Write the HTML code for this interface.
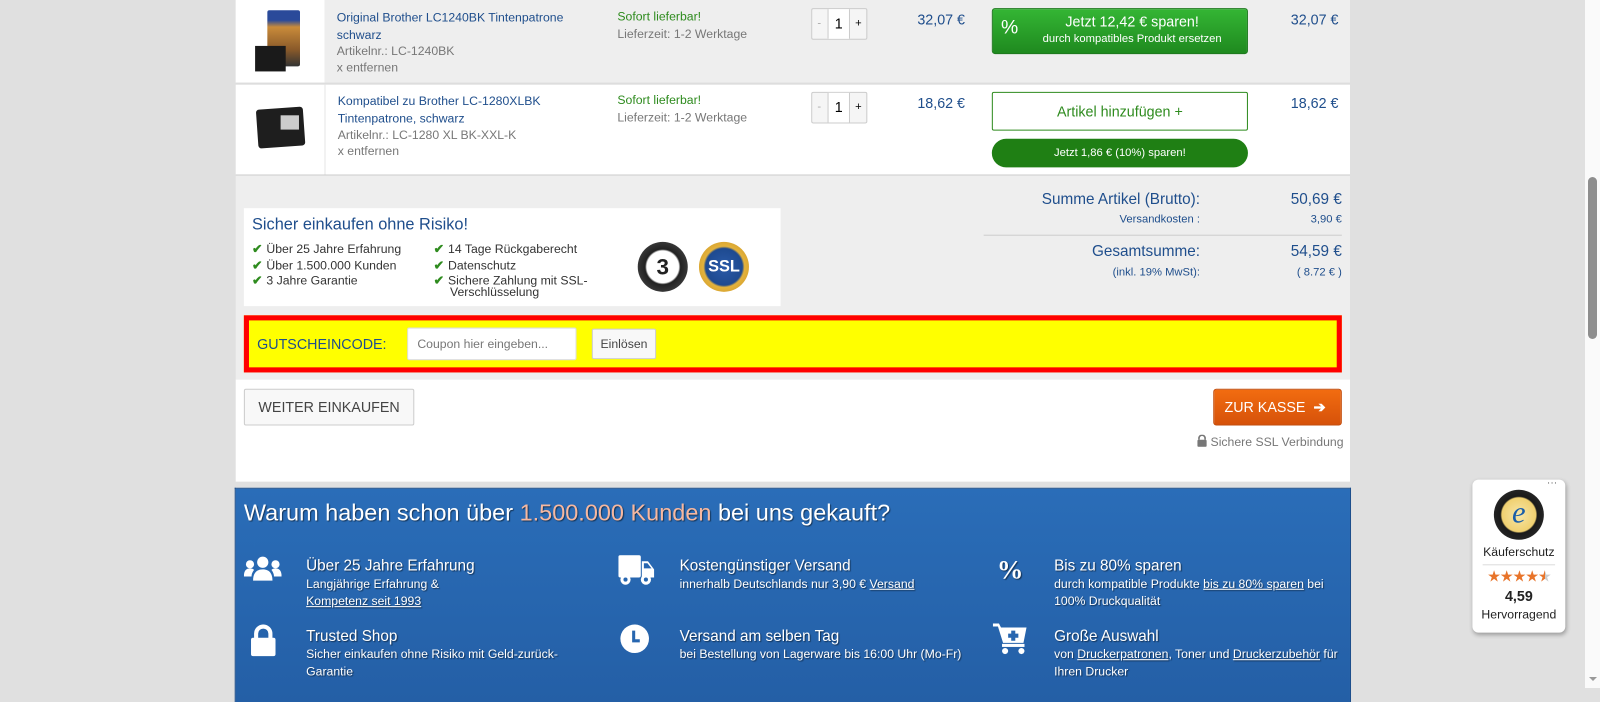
<!DOCTYPE html>
<html><head><meta charset="utf-8"><style>
*{margin:0;padding:0;box-sizing:border-box}
body{width:1600px;height:688px;overflow:hidden;background:#e0e0e0;font-family:"Liberation Sans",sans-serif;position:relative}
#w{position:absolute;left:0;top:0;width:1568px;height:675px;transform:scale(1.0204);transform-origin:0 0}
.a{position:absolute}
.blue{color:#1f4e8c}
.gray{color:#777}
.green{color:#2e8b1e}
.qty{position:absolute;width:55px;height:31px;border:1px solid #ccc;border-radius:2px;background:#f5f5f5;font-size:11px}
.qty span{position:absolute;top:8px}
.qty b{position:absolute;left:15px;top:0;width:22px;height:29px;background:#fff;border-left:1px solid #ccc;border-right:1px solid #ccc;font-weight:normal;font-size:14px;text-align:center;line-height:29px;color:#000}
.bl{font-size:12px;line-height:14px;color:#333}
.ck{color:#2e8b1e;font-weight:bold;margin-right:4px}
.wh{color:#fff;text-shadow:1px 1px 1px rgba(0,0,0,.5)}
.wt{font-size:15px}
.ws{font-size:12px;line-height:17px}
.ws u{text-decoration:underline}
</style></head><body>
<div id="w">
<div class="a" style="left:231px;top:0;width:1092px;height:81px;background:#eee"></div>
<div class="a" style="left:231px;top:0;width:87px;height:81px;background:#fff"></div>
<div class="a" style="left:231px;top:81px;width:1092px;height:2px;background:#ddd"></div>
<div class="a" style="left:231px;top:83px;width:1092px;height:88px;background:#fff"></div>
<div class="a" style="left:318px;top:83px;width:1px;height:88px;background:#e5e5e5"></div>
<div class="a" style="left:231px;top:171px;width:1092px;height:1px;background:#ccc"></div>
<div class="a" style="left:231px;top:172px;width:1092px;height:200px;background:#eee"></div>
<div class="a" style="left:231px;top:372px;width:1092px;height:100px;background:#fff"></div>

<div class="a" style="left:262px;top:10px;width:32px;height:55px;background:linear-gradient(#2a4a9a 0,#2a4a9a 18%,#c98b3a 30%,#8a5a2a 70%,#333 100%);border-radius:2px"></div>
<div class="a" style="left:250px;top:45px;width:30px;height:25px;background:#1a1a1a"></div>
<div class="a" style="left:252px;top:106px;width:46px;height:38px;background:#1e1e1e;border-radius:3px;transform:rotate(-4deg)"></div>
<div class="a" style="left:275px;top:113px;width:18px;height:14px;background:#ccc"></div>

<div class="a blue" style="left:330px;top:9px;font-size:12px;line-height:17px">Original Brother LC1240BK Tintenpatrone<br>schwarz</div>
<div class="a gray" style="left:330px;top:42px;font-size:12px;line-height:16px">Artikelnr.: LC-1240BK<br>x entfernen</div>
<div class="a green" style="left:605px;top:9px;font-size:12px">Sofort lieferbar!</div>
<div class="a gray" style="left:605px;top:26px;font-size:12px">Lieferzeit: 1-2 Werktage</div>
<div class="qty" style="left:795px;top:8px"><span style="left:5px;color:#aaa">-</span><b>1</b><span style="left:42px">+</span></div>
<div class="a blue" style="left:899px;top:11px;font-size:14px">32,07 €</div>
<div class="a" style="left:972px;top:8px;width:251px;height:45px;background:linear-gradient(#34b534,#1f8a1f);border:1px solid #1e7a1e;border-radius:3px;color:#fff">
<div class="a" style="left:8px;top:8px;font-size:19px">%</div>
<div class="a" style="left:0;width:100%;padding-left:24px;top:4px;text-align:center;font-size:14px">Jetzt 12,42 € sparen!</div>
<div class="a" style="left:0;width:100%;padding-left:24px;top:23px;text-align:center;font-size:11px">durch kompatibles Produkt ersetzen</div>
</div>
<div class="a blue" style="left:1265px;top:11px;font-size:14px">32,07 €</div>

<div class="a blue" style="left:331px;top:91px;font-size:12px;line-height:17px">Kompatibel zu Brother LC-1280XLBK<br>Tintenpatrone, schwarz</div>
<div class="a gray" style="left:331px;top:124px;font-size:12px;line-height:16px">Artikelnr.: LC-1280 XL BK-XXL-K<br>x entfernen</div>
<div class="a green" style="left:605px;top:91px;font-size:12px">Sofort lieferbar!</div>
<div class="a gray" style="left:605px;top:108px;font-size:12px">Lieferzeit: 1-2 Werktage</div>
<div class="qty" style="left:795px;top:90px"><span style="left:5px;color:#aaa">-</span><b>1</b><span style="left:42px">+</span></div>
<div class="a blue" style="left:899px;top:93px;font-size:14px">18,62 €</div>
<div class="a" style="left:972px;top:90px;width:251px;height:38px;border:1px solid #2e8b1e;border-radius:2px;background:#fff;color:#2e8b1e;font-size:14px;text-align:center;line-height:36px">Artikel hinzufügen +</div>
<div class="a" style="left:972px;top:136px;width:251px;height:28px;background:#1f7f14;border-radius:14px;color:#fff;font-size:11px;text-align:center;line-height:28px">Jetzt 1,86 € (10%) sparen!</div>
<div class="a blue" style="left:1265px;top:93px;font-size:14px">18,62 €</div>

<div class="a" style="left:239px;top:204px;width:526px;height:96px;background:#fff"></div>
<div class="a blue" style="left:247px;top:212px;font-size:16px">Sicher einkaufen ohne Risiko!</div>
<div class="a bl" style="left:247px;top:237px;line-height:15.5px"><span class="ck">✔</span>Über 25 Jahre Erfahrung<br><span class="ck">✔</span>Über 1.500.000 Kunden<br><span class="ck">✔</span>3 Jahre Garantie</div>
<div class="a bl" style="left:425px;top:237px;line-height:15.5px"><span class="ck">✔</span>14 Tage Rückgaberecht<br><span class="ck">✔</span>Datenschutz<br><span class="ck">✔</span>Sichere Zahlung mit SSL-</div>
<div class="a bl" style="left:441px;top:280px;line-height:12px">Verschlüsselung</div>
<div class="a" style="left:625px;top:237px;width:49px;height:49px;border-radius:50%;background:radial-gradient(#fff 0,#fff 45%,#222 50%,#555 100%);text-align:center;line-height:49px;font-size:22px;font-weight:bold;color:#222">3</div>
<div class="a" style="left:685px;top:237px;width:49px;height:49px;border-radius:50%;background:radial-gradient(#2a5aa8 0,#1e4a90 52%,#e3b23c 58%,#c8901e 100%);text-align:center;line-height:49px;font-size:16px;font-weight:bold;color:#fff">SSL</div>

<div class="a blue" style="left:900px;top:187px;width:276px;text-align:right;font-size:15px">Summe Artikel (Brutto):</div>
<div class="a blue" style="left:1200px;top:187px;width:115px;text-align:right;font-size:15px">50,69 €</div>
<div class="a blue" style="left:900px;top:209px;width:276px;text-align:right;font-size:11px">Versandkosten :</div>
<div class="a blue" style="left:1200px;top:209px;width:115px;text-align:right;font-size:11px">3,90 €</div>
<div class="a" style="left:964px;top:230px;width:351px;height:1px;background:#ccc"></div>
<div class="a blue" style="left:900px;top:238px;width:276px;text-align:right;font-size:15px">Gesamtsumme:</div>
<div class="a blue" style="left:1200px;top:238px;width:115px;text-align:right;font-size:15px">54,59 €</div>
<div class="a blue" style="left:900px;top:261px;width:276px;text-align:right;font-size:11px">(inkl. 19% MwSt):</div>
<div class="a blue" style="left:1200px;top:261px;width:115px;text-align:right;font-size:11px">( 8.72 € )</div>

<div class="a" style="left:239px;top:309px;width:1076px;height:56px;background:#ff0;border:5px solid #f00"></div>
<div class="a blue" style="left:252px;top:329px;font-size:14px">GUTSCHEINCODE:</div>
<div class="a" style="left:399px;top:321px;width:166px;height:32px;background:#fff;border:1px solid #ddd;border-radius:2px;font-size:12px;color:#777;padding:8px 9px">Coupon hier eingeben...</div>
<div class="a" style="left:580px;top:322px;width:63px;height:30px;background:#f8f8f8;border:1px solid #ccc;border-radius:2px;font-size:12px;color:#444;text-align:center;line-height:28px">Einlösen</div>

<div class="a" style="left:239px;top:381px;width:167px;height:36px;background:#f8f8f8;border:1px solid #ccc;border-radius:2px;font-size:14px;color:#444;text-align:center;line-height:34px">WEITER EINKAUFEN</div>
<div class="a" style="left:1189px;top:381px;width:126px;height:36px;background:linear-gradient(#f26c10,#d6520a);border:1px solid #c24a08;border-radius:3px;font-size:14px;color:#fff;line-height:34px;padding-left:10px">ZUR KASSE <span style="font-weight:bold;margin-left:4px">➔</span></div>
<div class="a" style="left:1173px;top:426px;font-size:12px;color:#777"><svg width="10" height="12" viewBox="0 0 10 12" style="vertical-align:-1px"><path d="M2 5V3.5a3 3 0 0 1 6 0V5" fill="none" stroke="#777" stroke-width="1.6"/><rect x="0.5" y="5" width="9" height="7" rx="1" fill="#777"/></svg> Sichere SSL Verbindung</div>

<div class="a" style="left:230px;top:478px;width:1094px;height:210px;background:linear-gradient(#2a6db8,#245fa6);border:1px solid #1d4f8c;border-bottom:none"></div>
<div class="a wh" style="left:239px;top:489px;font-size:23px">Warum haben schon über <span style="color:#f7b8a0">1.500.000 Kunden</span> bei uns gekauft?</div>

<svg class="a" style="left:239px;top:545px" width="37" height="28" viewBox="0 0 37 28" fill="#fff"><circle cx="18.5" cy="6" r="5.5"/><path d="M9 24c0-8 4-11 9.5-11S28 16 28 24z"/><circle cx="6" cy="8" r="4"/><path d="M0 20c0-6 2.5-8 6-8 2 0 3 .5 4 1.5-1.5 2-2.5 4-2.5 6.5z"/><circle cx="31" cy="8" r="4"/><path d="M37 20c0-6-2.5-8-6-8-2 0-3 .5-4 1.5 1.5 2 2.5 4 2.5 6.5z"/></svg>
<div class="a wh wt" style="left:300px;top:546px">Über 25 Jahre Erfahrung</div>
<div class="a wh ws" style="left:300px;top:564px">Langjährige Erfahrung &amp;<br><u>Kompetenz seit 1993</u></div>

<svg class="a" style="left:245px;top:612px" width="26" height="32" viewBox="0 0 26 32" fill="#fff"><path d="M6 14V9a7 7 0 0 1 14 0v5" fill="none" stroke="#fff" stroke-width="4"/><rect x="1" y="13" width="24" height="18" rx="2"/></svg>
<div class="a wh wt" style="left:300px;top:615px">Trusted Shop</div>
<div class="a wh ws" style="left:300px;top:633px">Sicher einkaufen ohne Risiko mit Geld-zurück-<br>Garantie</div>

<svg class="a" style="left:606px;top:544px" width="36" height="30" viewBox="0 0 36 30" fill="#fff"><rect x="0" y="0" width="22" height="22" rx="2"/><path d="M23 6h6l6 8v8H23z"/><path d="M25 8h3.5l4 5H25z" fill="#2766b0"/><circle cx="7" cy="24" r="5" fill="#fff"/><circle cx="7" cy="24" r="2" fill="#2766b0"/><circle cx="27" cy="24" r="5" fill="#fff"/><circle cx="27" cy="24" r="2" fill="#2766b0"/></svg>
<div class="a wh wt" style="left:666px;top:546px">Kostengünstiger Versand</div>
<div class="a wh ws" style="left:666px;top:564px">innerhalb Deutschlands nur 3,90 € <u>Versand</u></div>

<svg class="a" style="left:607px;top:611px" width="30" height="30" viewBox="0 0 30 30"><circle cx="15" cy="15" r="14" fill="#fff"/><path d="M14 7v10h6" fill="none" stroke="#2766b0" stroke-width="3"/></svg>
<div class="a wh wt" style="left:666px;top:615px">Versand am selben Tag</div>
<div class="a wh ws" style="left:666px;top:633px">bei Bestellung von Lagerware bis 16:00 Uhr (Mo-Fr)</div>

<div class="a wh" style="left:977px;top:544px;font-size:26px;font-weight:bold;font-family:'Liberation Serif',serif">%</div>
<div class="a wh wt" style="left:1033px;top:546px">Bis zu 80% sparen</div>
<div class="a wh ws" style="left:1033px;top:564px">durch kompatible Produkte <u>bis zu 80% sparen</u> bei<br>100% Druckqualität</div>

<svg class="a" style="left:973px;top:610px" width="34" height="32" viewBox="0 0 34 32" fill="#fff"><path d="M0 1h6l2 4h25l-3 15H10L5 4H0z"/><rect x="9" y="21" width="22" height="3"/><circle cx="12" cy="28" r="3"/><circle cx="28" cy="28" r="3"/><path d="M18 8h4v3h3v4h-3v3h-4v-3h-3v-4h3z" fill="#2766b0"/></svg>
<div class="a wh wt" style="left:1033px;top:615px">Große Auswahl</div>
<div class="a wh ws" style="left:1033px;top:633px">von <u>Druckerpatronen</u>, Toner und <u>Druckerzubehör</u> für<br>Ihren Drucker</div>

<div class="a" style="left:1443px;top:470px;width:91px;height:150px;background:#fff;border-radius:6px;box-shadow:1px 2px 4px rgba(0,0,0,.3)"></div>
<div class="a" style="left:1516px;top:468px;font-size:10px;color:#555">···</div>
<div class="a" style="left:1464px;top:480px;width:49px;height:49px;border-radius:50%;background:radial-gradient(#f7e6a8 0,#f0d070 48%,#1a1a1a 52%,#333 100%);text-align:center;line-height:46px;font-size:30px;font-style:italic;color:#1a5ea8;font-family:'Liberation Serif',serif">e</div>
<div class="a" style="left:1443px;top:534px;width:91px;text-align:center;font-size:12px;color:#222">Käuferschutz</div>
<div class="a" style="left:1453px;top:553px;width:71px;height:1px;background:#ddd"></div>
<div class="a" style="left:1443px;top:556px;width:91px;text-align:center;font-size:15px;color:#e8742a;letter-spacing:-1px">★★★★<span style="background:linear-gradient(90deg,#e8742a 55%,#ccc 55%);-webkit-background-clip:text;color:transparent">★</span></div>
<div class="a" style="left:1443px;top:576px;width:91px;text-align:center;font-size:14px;font-weight:bold;color:#222">4,59</div>
<div class="a" style="left:1443px;top:595px;width:91px;text-align:center;font-size:12px;color:#222">Hervorragend</div>
</div>

<div class="a" style="left:1585px;top:0;width:15px;height:688px;background:#fafafa"></div>
<div class="a" style="left:1588px;top:177px;width:9px;height:162px;background:#8e8e8e;border-radius:5px"></div>
<div class="a" style="left:1589px;top:677px;width:0;height:0;border-left:4px solid transparent;border-right:4px solid transparent;border-top:4px solid #999"></div>
</body></html>
